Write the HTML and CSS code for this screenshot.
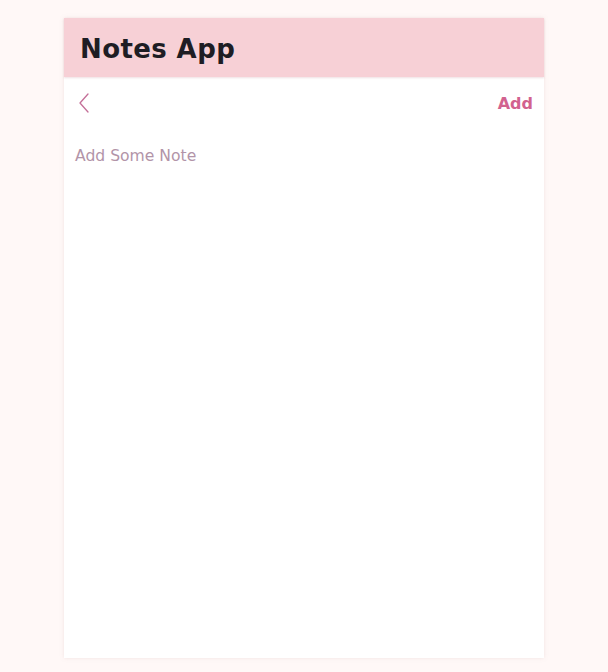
FILE: index.html
```html
<!DOCTYPE html>
<html lang="en">
<head>
<meta charset="utf-8">
<title>Notes App</title>
<link rel="stylesheet" href="styles.css">
</head>
<body>
<div class="card">
  <header class="header"><h1 class="title">Notes App</h1></header>
  <div class="toolbar">
    <button class="back" aria-label="Back">
      <svg width="10" height="20" viewBox="0 0 10 20"><path d="M9 1 L1 10 L9 19" fill="none" stroke="#c46f98" stroke-width="1.3" stroke-linecap="round" stroke-linejoin="round"/></svg>
    </button>
    <button class="add">Add</button>
  </div>
  <textarea class="note" placeholder="Add Some Note"></textarea>
</div>
</body>
</html>
```
FILE: styles.css
```css
html, body { margin: 0; padding: 0; }
body {
  background: #fff8f7;
  font-family: "DejaVu Sans", "Noto Sans", sans-serif;
  min-height: 672px;
}
.card {
  width: 480px;
  height: 640px;
  margin: 18px auto 0;
  background: #ffffff;
  box-shadow: 0 0 4px rgba(200, 170, 170, 0.25);
  display: flex;
  flex-direction: column;
}
.header {
  height: 59px;
  background: #f7d0d6;
  display: flex;
  align-items: center;
  padding: 2px 0 0 16px;
  box-sizing: border-box;
  box-shadow: 0 1px 2px rgba(200, 150, 160, 0.3);
}
.title {
  margin: 0;
  font-size: 26px;
  font-weight: 700;
  color: #1e1d24;
  letter-spacing: 0.4px;
}
.toolbar {
  display: flex;
  justify-content: space-between;
  align-items: center;
  padding: 16px 11px 0 15px;
}
.back {
  background: none;
  border: 0;
  padding: 0;
  display: flex;
  cursor: pointer;
}
.add {
  background: none;
  border: 0;
  padding: 0;
  font-family: inherit;
  font-size: 16px;
  font-weight: 700;
  color: #d2628f;
  cursor: pointer;
}
.note {
  flex: 1;
  margin: 34px 0 0 0;
  padding: 0 12px 0 11px;
  border: 0;
  outline: none;
  resize: none;
  font-family: inherit;
  font-size: 15.6px;
  color: #555;
  background: transparent;
}
.note::placeholder { color: #b294a8; }
```
